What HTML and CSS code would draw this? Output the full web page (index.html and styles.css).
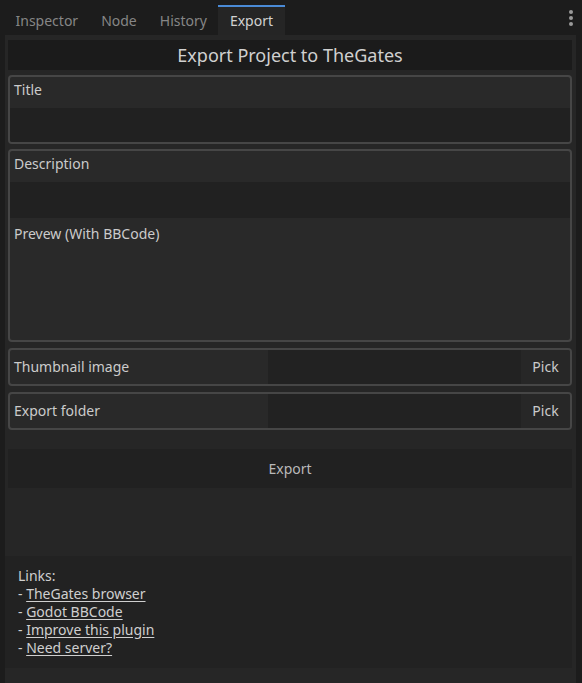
FILE: index.html
```html
<!DOCTYPE html>
<html lang="en">
<head>
    <meta charset="UTF-8">
    <title>Export</title>
    <link rel="stylesheet" href="styles.css">
</head>
<body>
    <div class="tabs">
        <div class="tab">Inspector</div>
        <div class="tab">Node</div>
        <div class="tab">History</div>
        <div class="tab active">Export</div>
        <div class="menu"><span></span><span></span><span></span></div>
    </div>

    <div class="panel">
        <div class="heading">Export Project to TheGates</div>

        <div class="box title-box">
            <div class="label">Title</div>
            <div class="input"></div>
        </div>

        <div class="box desc-box">
            <div class="label">Description</div>
            <div class="input"></div>
            <div class="label">Prevew (With BBCode)</div>
            <div class="preview"></div>
        </div>

        <div class="box row">
            <div class="row-label">Thumbnail image</div>
            <div class="row-field"></div>
            <div class="pick">Pick</div>
        </div>

        <div class="box row">
            <div class="row-label">Export folder</div>
            <div class="row-field"></div>
            <div class="pick">Pick</div>
        </div>

        <div class="export-btn">Export</div>

        <div class="links">
            <div>Links:</div>
            <div>- <u>TheGates browser</u></div>
            <div>- <u>Godot BBCode</u></div>
            <div>- <u>Improve this plugin</u></div>
            <div>- <u>Need server?</u></div>
        </div>
    </div>
</body>
</html>
```

FILE: styles.css
```css
body{
    margin: 0;
    background-color: #1c1c1c;
    font-family: "Noto Sans", "Open Sans", sans-serif;
    font-size: 14px;
    color: #cbcbcb;
    height: 683px;
    overflow: hidden;
}

.tabs{
    display: flex;
    height: 35px;
    padding-left: 4px;
}
.tab{
    padding: 0 11.5px;
    margin-top: 5px;
    line-height: 27px;
    color: #868686;
    border-top: 2px solid transparent;
}
.tab.active{
    background-color: #252525;
    color: #d2d2d2;
    border-top-color: #4a8ad6;
}
.menu{
    margin-left: auto;
    margin-right: 9px;
    display: flex;
    flex-direction: column;
    justify-content: center;
    gap: 2px;
}
.menu span{
    width: 4px;
    height: 4px;
    border-radius: 50%;
    background-color: #9a9a9a;
}

.panel{
    margin: 0 6px 0 5px;
    height: 648px;
    padding: 5px 4px 0 3px;
    background-color: #262626;
    display: flex;
    flex-direction: column;
    box-sizing: border-box;
}

.heading{
    height: 30px;
    line-height: 30px;
    background-color: #1b1b1b;
    text-align: center;
    font-size: 18px;
    color: #d0d0d0;
}

.box{
    margin-top: 5px;
    border: 2px solid #464646;
    border-radius: 4px;
    background-color: #292929;
    overflow: hidden;
}
.label{
    padding-left: 4px;
    height: 31px;
    line-height: 26px;
}
.input{
    height: 35px;
    background-color: #212121;
}
.title-box{
    height: 65px;
}
.desc-box{
    height: 189px;
}
.desc-box .input{
    height: 36px;
}
.desc-box .label:nth-child(3){
    height: 34px;
    line-height: 32px;
}

.row{
    margin-top: 6px;
    height: 34px;
    display: flex;
}
.row-label{
    width: 254px;
    padding-left: 4px;
    line-height: 34px;
}
.row-field{
    flex: 1;
    background-color: #222222;
}
.pick{
    width: 49px;
    text-align: center;
    line-height: 34px;
    background-color: #272727;
}

.export-btn{
    margin-top: 19px;
    height: 39px;
    line-height: 39px;
    text-align: center;
    background-color: #212121;
    color: #b9b9b9;
}

.links{
    margin: 68px 0 0 -3px;
    height: 112px;
    padding: 11px 0 0 13px;
    box-sizing: border-box;
    background-color: #222222;
    line-height: 18px;
    color: #cfcfcf;
}
.links u{
    text-underline-offset: 2px;
}
```
